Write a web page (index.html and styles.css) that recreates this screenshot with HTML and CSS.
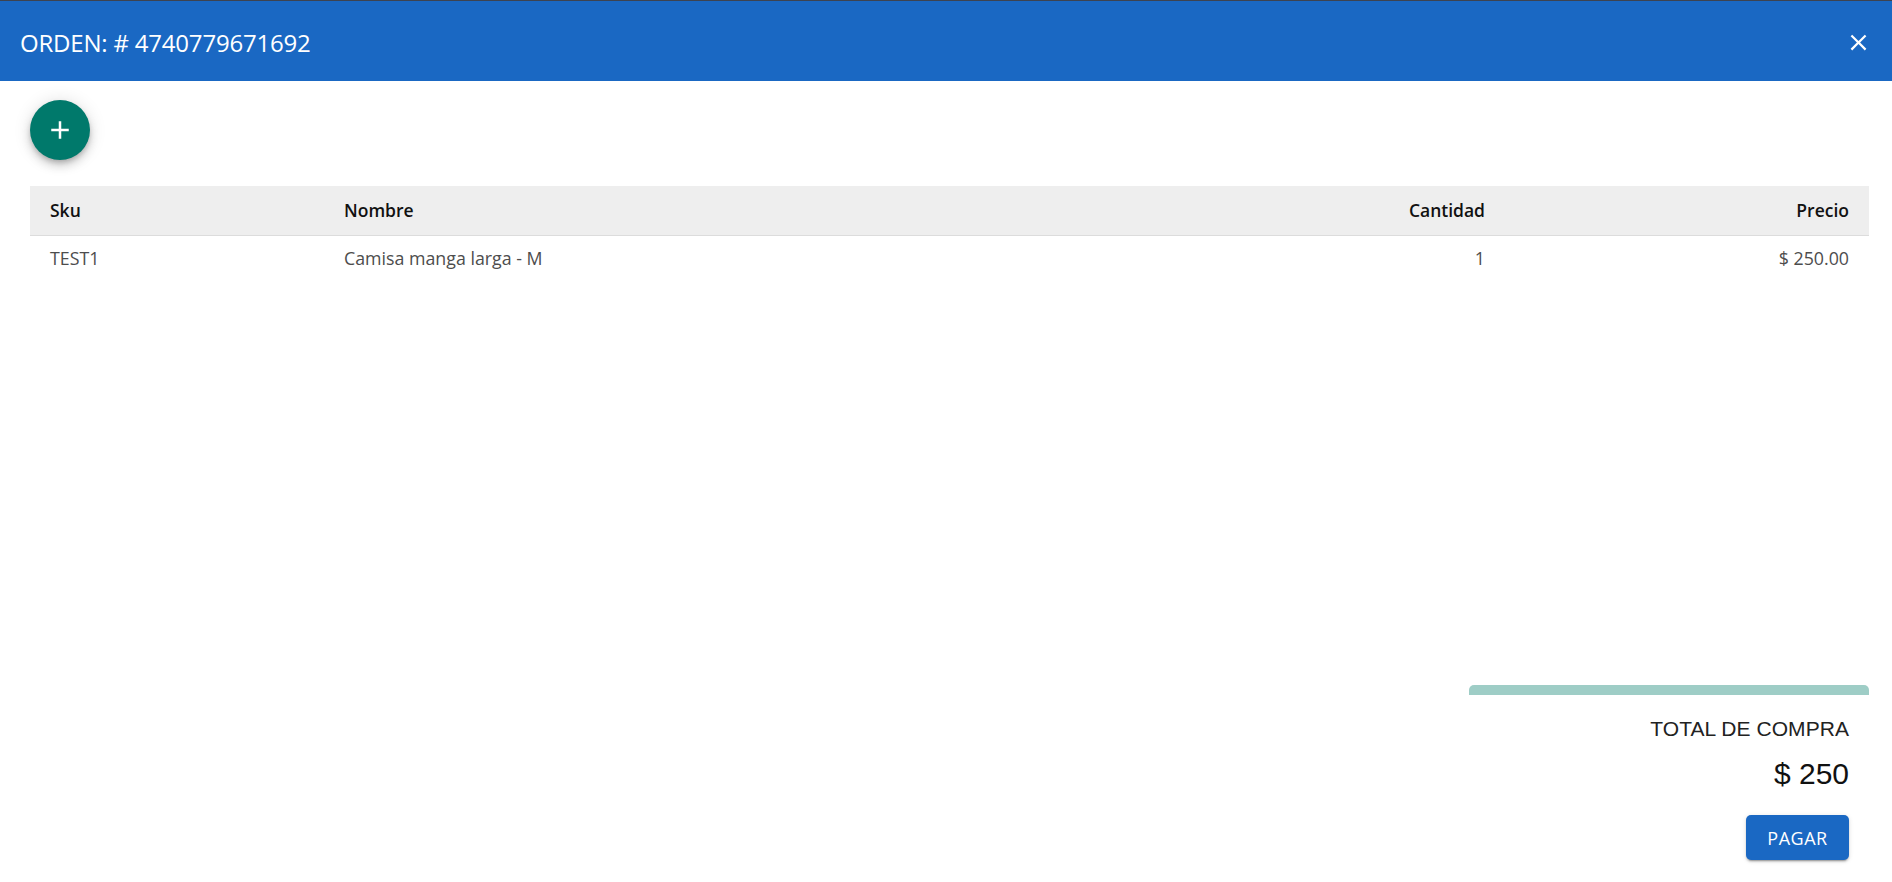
FILE: index.html
```html
<!DOCTYPE html>
<html lang="es">
<head>
<meta charset="utf-8">
<title>Orden</title>
<link rel="stylesheet" href="styles.css">
</head>
<body>
<div class="dialog">
  <header class="bar">
    <h1 class="title">ORDEN: # 4740779671692</h1>
    <button class="close" aria-label="Cerrar">
      <svg viewBox="0 0 24 24" width="27" height="27"><path fill="#fff" d="M19 6.41 17.59 5 12 10.59 6.41 5 5 6.41 10.59 12 5 17.59 6.41 19 12 13.41 17.59 19 19 17.59 13.41 12z"/></svg>
    </button>
  </header>
  <main class="content">
    <button class="fab" aria-label="Agregar">
      <svg viewBox="0 0 24 24" width="30" height="30"><path fill="#fff" d="M19 13h-6v6h-2v-6H5v-2h6V5h2v6h6v2z"/></svg>
    </button>
    <div class="table">
      <div class="row head">
        <div class="cell">Sku</div>
        <div class="cell">Nombre</div>
        <div class="cell right">Cantidad</div>
        <div class="cell right">Precio</div>
      </div>
      <div class="row body">
        <div class="cell">TEST1</div>
        <div class="cell">Camisa manga larga - M</div>
        <div class="cell right">1</div>
        <div class="cell right">$ 250.00</div>
      </div>
    </div>
    <section class="summary">
      <div class="accent"></div>
      <div class="total-label">TOTAL DE COMPRA</div>
      <div class="total-value">$ 250</div>
      <button class="pay">PAGAR</button>
    </section>
  </main>
</div>
</body>
</html>
```
FILE: styles.css
```css
* { box-sizing: border-box; }
html, body { margin: 0; padding: 0; }
body {
  font-family: "Open Sans", "Liberation Sans", sans-serif;
  background: #fff;
  color: rgba(0,0,0,0.87);
}
.dialog {
  height: 882px;
  display: flex;
  flex-direction: column;
  overflow: hidden;
}
.bar {
  height: 81px;
  border-top: 1px solid #3d4350;
  background: #1a68c3;
  display: flex;
  align-items: center;
  justify-content: space-between;
  padding: 2px 19px 0 20px;
  flex: none;
}
.title {
  margin: 0;
  font-size: 24px;
  font-weight: 400;
  color: #fff;
  letter-spacing: -0.2px;
}
.close {
  width: 30px;
  height: 30px;
  padding: 0;
  border: 0;
  background: transparent;
  display: flex;
  align-items: center;
  justify-content: center;
}
.content {
  flex: 1;
  display: flex;
  flex-direction: column;
  padding: 19px 23px 0 30px;
}
.fab {
  width: 60px;
  height: 60px;
  border-radius: 50%;
  border: 0;
  padding: 0;
  background: #00796b;
  display: flex;
  align-items: center;
  justify-content: center;
  box-shadow: 0 3px 5px -1px rgba(0,0,0,.2), 0 6px 10px 0 rgba(0,0,0,.14), 0 1px 18px 0 rgba(0,0,0,.12);
  flex: none;
}
.table {
  margin-top: 26px;
  flex: 1;
}
.row {
  display: grid;
  grid-template-columns: 294px 1fr 300px 364px;
}
.cell {
  padding: 0 20px;
  font-size: 17.5px;
  white-space: nowrap;
}
.cell.right { text-align: right; }
.head {
  background: #eeeeee;
  border-bottom: 1px solid #dcdcdc;
}
.head .cell {
  line-height: 49px;
  font-weight: 600;
  color: #111;
}
.body .cell {
  line-height: 45px;
  font-size: 17.8px;
  color: #4d4d4d;
}
.summary {
  align-self: flex-end;
  width: 400px;
  display: flex;
  flex-direction: column;
  align-items: flex-end;
  padding-bottom: 22px;
}
.accent {
  width: 100%;
  height: 10px;
  background: #9ecdc6;
  border-radius: 5px 5px 0 0;
}
.total-label {
  margin-top: 21px;
  padding-right: 20px;
  font-family: "Liberation Sans", Arial, sans-serif;
  font-size: 21px;
  line-height: 25px;
  letter-spacing: 0.05px;
  color: #222;
}
.total-value {
  margin-top: 15px;
  padding-right: 20px;
  font-family: "Liberation Sans", Arial, sans-serif;
  font-size: 30px;
  line-height: 36px;
  color: #111;
}
.pay {
  margin-top: 23px;
  margin-right: 20px;
  width: 103px;
  height: 45px;
  border: 0;
  border-radius: 5px;
  background: #1a68c3;
  color: #fff;
  font-family: "Open Sans", sans-serif;
  font-size: 18px;
  letter-spacing: 0.5px;
  box-shadow: 0 3px 1px -2px rgba(0,0,0,.2), 0 2px 2px 0 rgba(0,0,0,.14), 0 1px 5px 0 rgba(0,0,0,.12);
}
```
